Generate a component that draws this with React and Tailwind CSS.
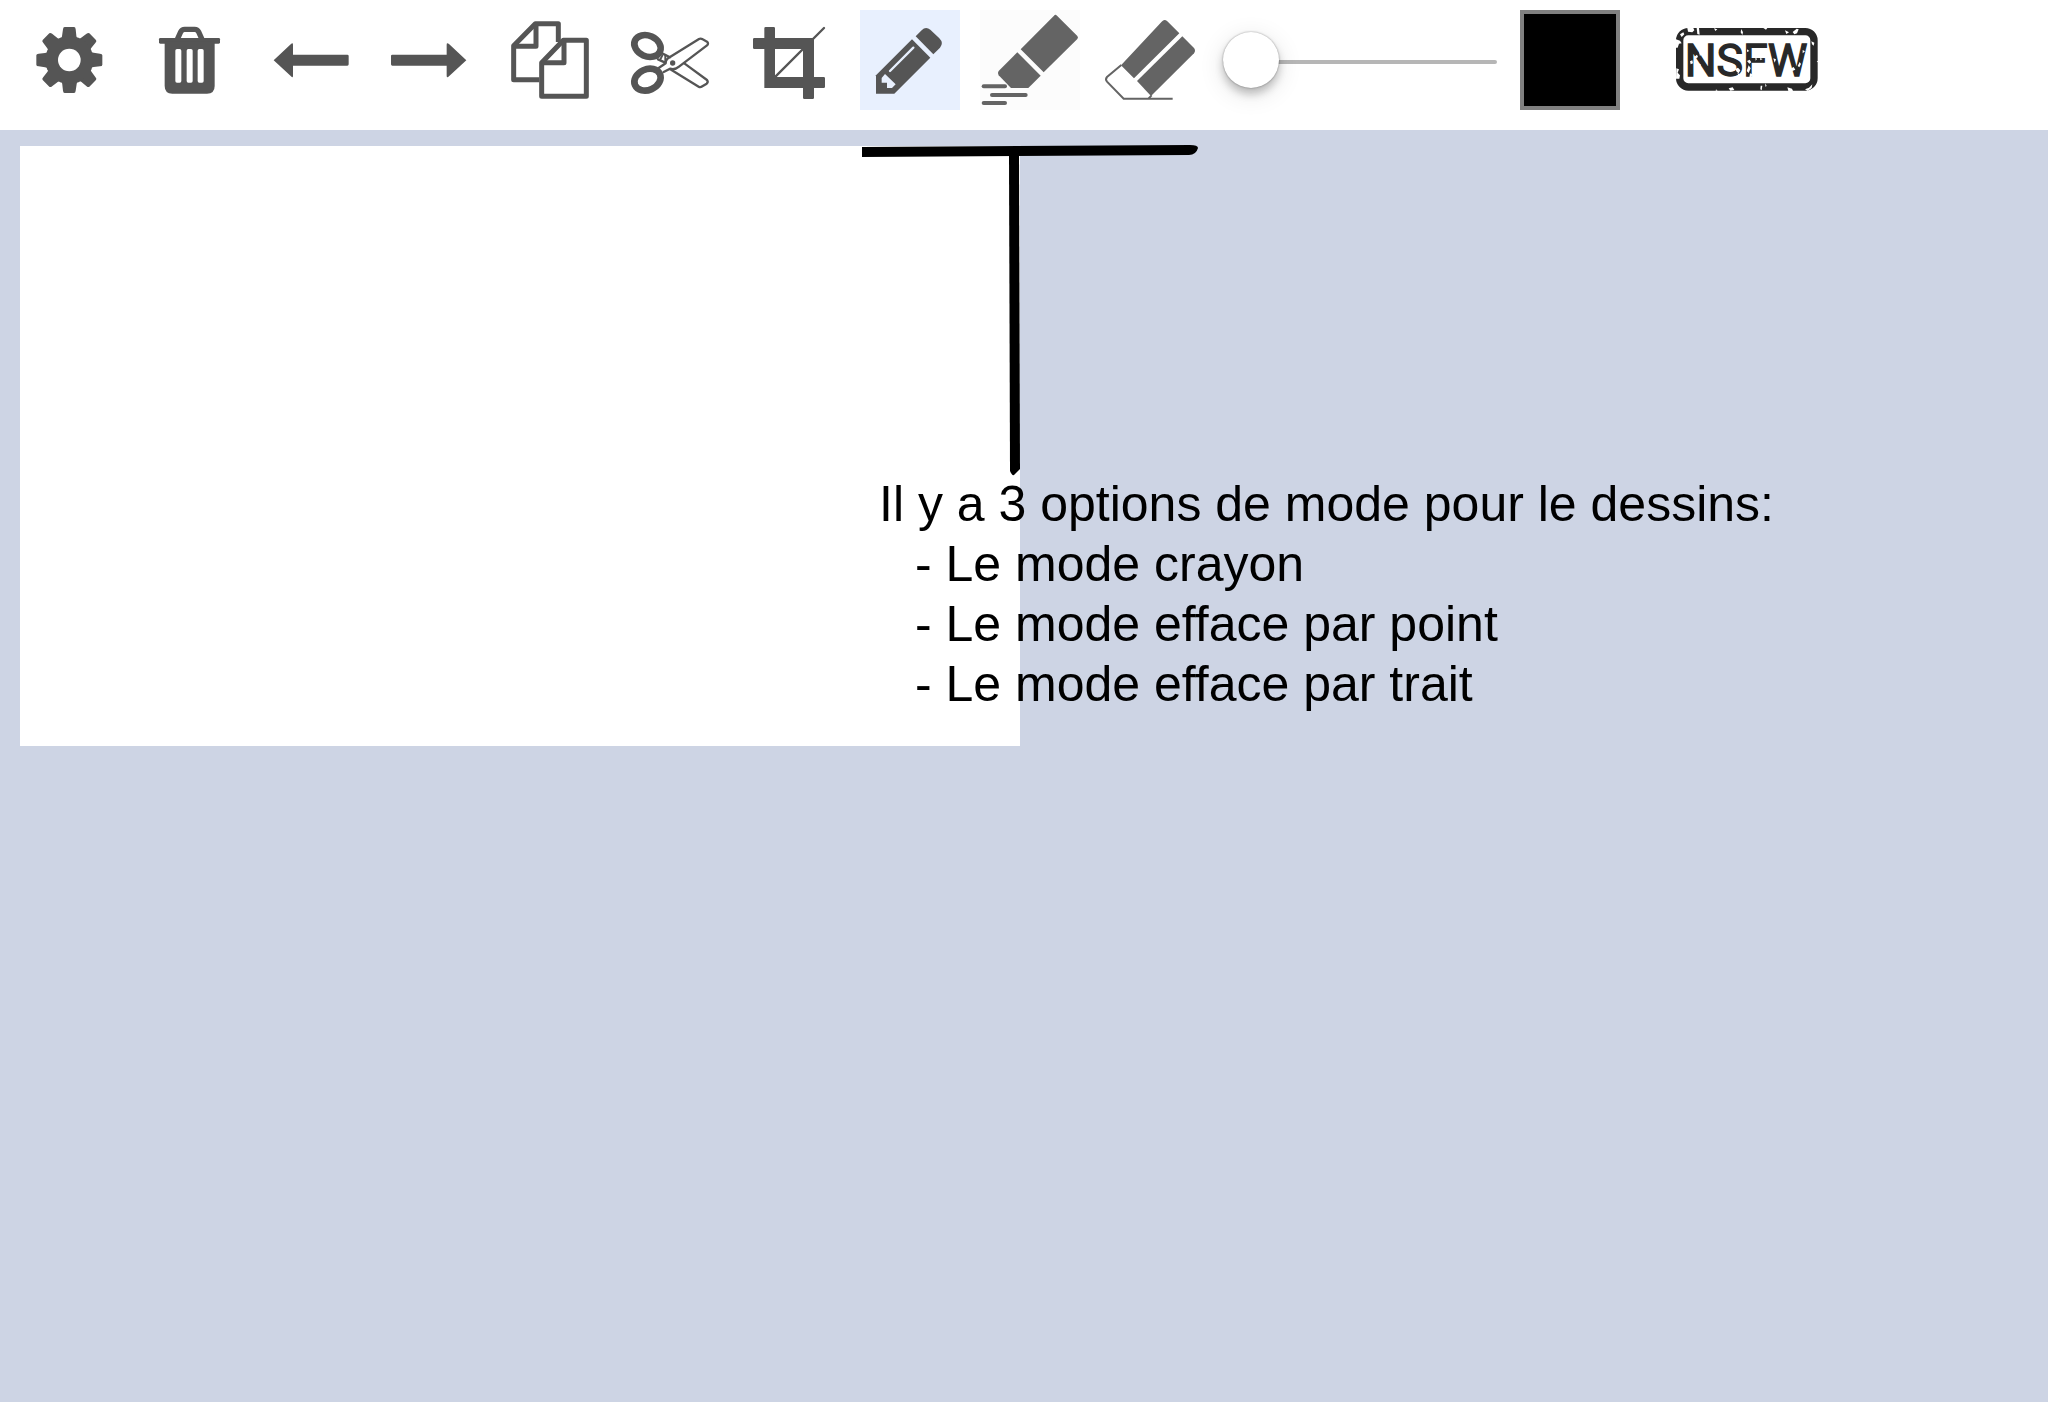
const INK = '#555555';

function ToolButton({ label, active, tint, children, viewBox }) {
  const bg = active ? 'bg-[#e8f0fe]' : tint ? 'bg-[#fcfcfc]' : 'bg-white';
  return (
    <button type="button" aria-label={label} aria-pressed={active} className={`size-25 shrink-0 ${bg}`}>
      <svg viewBox={viewBox} className="block size-full" aria-hidden="true">
        {children}
      </svg>
    </button>
  );
}

function Gear() {
  const angles = [0, 45, 90, 135, 180, 225, 270, 315];
  return (
    <g fill={INK}>
      {angles.map((a) => (
        <path
          key={a}
          transform={`rotate(${a} 208 180)`}
          d="M182 124 Q187 108 189 88 Q189.500 81 194 81 H222 Q226.500 81 227 88 Q228 108 233 124 Z"
        />
      ))}
      <circle cx="208" cy="180" r="72" />
      <circle cx="208" cy="180" r="34" fill="#ffffff" />
    </g>
  );
}

function Trash() {
  return (
    <g>
      <path d="M532 118 L542 96 Q546 88 554 88 H584 Q592 88 596 96 L606 118" fill="none" stroke={INK} strokeWidth="16" />
      <rect x="477" y="114" width="183" height="17" rx="4" fill={INK} />
      <path d="M494 125 H644 V258 Q644 281 621 281 H517 Q494 281 494 258 Z" fill={INK} />
      <g fill="#ffffff">
        <rect x="526" y="147" width="18" height="101" rx="5" />
        <rect x="560" y="147" width="18" height="101" rx="5" />
        <rect x="593" y="147" width="18" height="101" rx="5" />
      </g>
    </g>
  );
}

function Copy() {
  return (
    <g fill="none" stroke={INK} strokeWidth="15" strokeLinejoin="round">
      <path d="M148 239 H71 V137 L136 71 H205 V126" />
      <path d="M71 139 H138 V72" />
      <path d="M155 188 L220 121 H289 V289 H155 Z" fill="#ffffff" />
      <path d="M155 188 H222 V121" />
    </g>
  );
}

function Scissors() {
  return (
    <g stroke={INK} strokeLinejoin="round" strokeLinecap="round" fill="none">
      <path d="M541 208 L626 260 Q631 263 637 259 L650 251 Q656 246 651 240 L583 190" strokeWidth="7" />
      <path d="M504 178 L524 187 M519 161 L540 172" strokeWidth="7" />
      <path d="M517 166 L511 178 M526 165 V184" strokeWidth="6" />
      <path
        d="M506 204 L527 190 Q527 177 540 171 L627 117 Q632 114 638 118 L651 125 Q657 130 651 136 L567 200 Q556 210 540 206 L521 216"
        strokeWidth="7"
      />
      <ellipse cx="472.500" cy="138" rx="41" ry="31" transform="rotate(24 472.500 138)" strokeWidth="20" />
      <ellipse cx="472.500" cy="239" rx="41" ry="31" transform="rotate(-24 472.500 239)" strokeWidth="20" />
      <circle cx="548" cy="189" r="8" fill={INK} stroke="none" />
    </g>
  );
}

function Crop() {
  return (
    <g fill={INK}>
      <path d="M137 229 L282 84" stroke={INK} strokeWidth="7" strokeLinecap="round" />
      <path
        fillRule="evenodd"
        d="M107 81 H131 Q135 81 135 85 V114 H252 V231 H281 Q285 231 285 235 V260 Q285 264 281 264 H252 V293 Q252 297 248 297 H223 Q219 297 219 293 V264 H103 V147 H73 Q69 147 69 143 V118 Q69 114 73 114 H103 V85 Q103 81 107 81 Z M135 147 V231 H219 V147 Z"
      />
    </g>
  );
}

function Pencil() {
  return (
    <g fill={INK}>
      <path d="M438 226 L546 118 L601 173 L493 281 H438 Z" />
      <path d="M557 109 L575 91 Q587 78 601 89 L628 115 Q642 129 630 143 L610 163 Z" />
      <path d="M480 213 L550 143" stroke="#e8f0fe" strokeWidth="7" strokeLinecap="round" />
      <path d="M465 222 L497 253 L486 264 H471 V248 H455 V234 Z" fill="#e8f0fe" />
    </g>
  );
}

function PointEraser() {
  return (
    <g fill="#646464">
      <path d="M182 148 L282 47 Q286 42 291 47 L352 108 Q356 113 352 117 L251 217 Z" />
      <path d="M172 157 L242 227 L205 264 H153 L116 226 Q112 219 116 213 Z" />
      <g stroke="#646464" strokeWidth="12" strokeLinecap="round">
        <path d="M71 259 H135" />
        <path d="M96 285 H197" />
        <path d="M71 309 H135" />
      </g>
    </g>
  );
}

function StrokeEraser() {
  return (
    <g fill="#646464">
      <path d="M483 196 L605 65 Q613 55 622 64 L658 100 L522 235 Z" />
      <path d="M667 109 L702 144 Q708 152 702 160 L573 288 L531 243 Z" />
      <path d="M484 195 L441 231 Q435 238 441 245 L491 296 H638 M575 286 L565 296" fill="none" stroke="#646464" strokeWidth="6" />
    </g>
  );
}

function NsfwStamp() {
  return (
    <svg viewBox="420 30 600 300" className="block size-full">
      <rect x="539" y="95" width="403" height="166" rx="26" fill="none" stroke="#282828" strokeWidth="22" />
      <text
        x="554"
        y="229"
        fill="#282828"
        stroke="#282828"
        strokeWidth="4"
        fontSize="134"
        fontFamily="Roboto, 'Liberation Sans', sans-serif"
      >
        NSFW
      </text>
      <g fill="#ffffff">
        <path d="M562 84 l18 0 l3 7 l-6 6 l-13 -2 z" />
        <path d="M590 84 l7 0 l2 20 l-7 -2 z" />
        <path d="M540 103 l10 -6 l3 6 l-8 8 z" />
        <path d="M528 118 l12 4 l5 8 l-8 1 l-4 12 l-5 0 z" />
        <path d="M529 205 l8 3 l-4 10 l7 8 l-2 10 l-10 0 z" />
        <path d="M642 85 l10 3 l-6 5 z M724 87 l5 10 l-2 8 l-5 -8 z M790 84 l12 0 l-4 5 z" />
        <path d="M855 91 l12 6 l-8 5 z M878 96 l12 -10 l6 2 l-5 12 l-8 3 z" />
        <path d="M934 124 l9 4 l-2 9 l-5 -4 z M950 183 l5 0 v5 z" />
        <path d="M686 265 l12 -3 l5 8 l-12 2 z M782 257 l5 0 l-2 14 l-4 -3 z M796 250 l4 8 l-4 2 z" />
        <path d="M862 262 l14 4 l3 7 l-14 0 z M915 268 l12 -5 l10 -10 l-2 11 l-12 9 z M648 268 l5 4 h-6 z" />
        <path d="M570 184 l7 -3 l2 9 l-7 3 z M583 170 l8 -6 l3 7 l-8 6 z M594 190 l8 3 l-2 14 l-5 -6 z" />
        <path d="M597 155 l7 6 l-4 8 z M706 207 l8 -4 l7 8 l-5 9 l-6 -5 z M712 219 l10 5 l-5 6 z" />
        <path d="M741 183 l8 -4 l5 8 l-6 4 z M746 196 l6 9 l-6 14 l-6 -6 z M750 220 l8 3 l-4 10 h-6 z" />
        <path d="M766 172 l5 5 l-4 5 z M780 174 l8 3 l-7 4 z M741 148 l7 5 l-7 3 z" />
        <path d="M820 175 l8 3 l-4 10 z M872 206 l9 -5 l5 8 l-9 4 z M893 198 l6 -12 l4 6 l-5 10 z M908 150 l7 4 l-7 6 z" />
      </g>
    </svg>
  );
}

export default function App() {
  return (
    <div className="flex min-h-screen flex-col bg-[#cdd4e4] font-['Liberation_Sans',Arial,sans-serif] text-black">
      <header className="flex items-center gap-5 bg-white px-5 pt-2.5 pb-5">
        <ToolButton label="Paramètres" viewBox="60 30 300 300"><Gear /></ToolButton>
        <ToolButton label="Supprimer" viewBox="420 30 300 300"><Trash /></ToolButton>
        <ToolButton label="Annuler" viewBox="30 30 300 300">
          <path d="M71 181 L123 132 Q129 127 129 134 V164 H292 Q296 164 296 168 V193 Q296 197 292 197 H129 V227 Q129 235 123 229 Z" fill={INK} />
        </ToolButton>
        <ToolButton label="Rétablir" viewBox="390 30 300 300">
          <path d="M649 181 L597 132 Q590 127 590 134 V164 H427 Q423 164 423 168 V193 Q423 197 427 197 H590 V227 Q590 235 597 229 Z" fill={INK} />
        </ToolButton>
        <ToolButton label="Copier" viewBox="30 30 300 300"><Copy /></ToolButton>
        <ToolButton label="Couper" viewBox="390 30 300 300"><Scissors /></ToolButton>
        <ToolButton label="Rogner" viewBox="30 30 300 300"><Crop /></ToolButton>
        <ToolButton label="Crayon" viewBox="390 30 300 300" active><Pencil /></ToolButton>
        <ToolButton label="Effacer par point" viewBox="60 30 300 300" tint><PointEraser /></ToolButton>
        <ToolButton label="Effacer par trait" viewBox="420 30 300 300"><StrokeEraser /></ToolButton>
        <div className="flex w-70 shrink-0 px-[3px]">
          <input
            type="range"
            min="1"
            max="100"
            defaultValue="1"
            aria-label="Épaisseur du trait"
            className="mt-1 h-1 w-full appearance-none rounded-full bg-[#b6b6b6] [&::-webkit-slider-runnable-track]:h-1 [&::-webkit-slider-thumb]:-mt-7 [&::-webkit-slider-thumb]:size-14 [&::-webkit-slider-thumb]:appearance-none [&::-webkit-slider-thumb]:rounded-full [&::-webkit-slider-thumb]:bg-white [&::-webkit-slider-thumb]:shadow-[0_0_2px_rgba(0,0,0,0.4),0_6px_8px_rgba(0,0,0,0.22),0_6px_26px_rgba(0,0,0,0.12)]"
          />
        </div>
        <button type="button" aria-label="Couleur" className="size-25 shrink-0 border-4 border-[#808080] bg-black" />
        <button type="button" aria-label="NSFW" className="h-25 w-50 shrink-0">
          <NsfwStamp />
        </button>
      </header>

      <main className="relative px-5 pt-4">
        <div className="h-[600px] w-[1000px] bg-white" />
        <svg viewBox="0 0 400 360" className="absolute top-0 left-[840px] h-[360px] w-[400px]" aria-hidden="true">
          <path d="M22 17 L350 15 Q358 15 358 18 Q356 25 349 25 L22 27 Z" />
          <path d="M169 24 H179 L180 339 L174 345 Q172 346 170 341 Z" />
        </svg>
        <div className="absolute top-[344px] left-[879px] text-[50px] leading-[60px] whitespace-nowrap">
          <p>Il y a 3 options de mode pour le dessins:</p>
          <ul className="pl-9">
            <li>- Le mode crayon</li>
            <li>- Le mode efface par point</li>
            <li>- Le mode efface par trait</li>
          </ul>
        </div>
      </main>
    </div>
  );
}
